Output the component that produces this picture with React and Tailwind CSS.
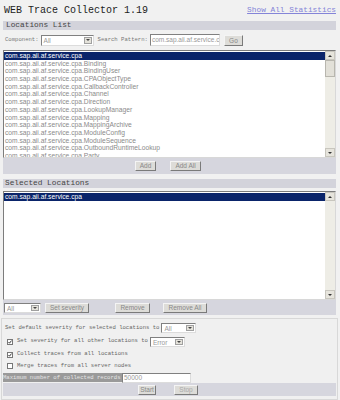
const mono = { fontFamily: '"Liberation Mono", "Courier New", monospace' };
const sans = { fontFamily: '"Liberation Sans", Arial, sans-serif' };

const locations = [
  "com.sap.aii.af.service.cpa",
  "com.sap.aii.af.service.cpa.Binding",
  "com.sap.aii.af.service.cpa.BindingUser",
  "com.sap.aii.af.service.cpa.CPAObjectType",
  "com.sap.aii.af.service.cpa.CallbackController",
  "com.sap.aii.af.service.cpa.Channel",
  "com.sap.aii.af.service.cpa.Direction",
  "com.sap.aii.af.service.cpa.LookupManager",
  "com.sap.aii.af.service.cpa.Mapping",
  "com.sap.aii.af.service.cpa.MappingArchive",
  "com.sap.aii.af.service.cpa.ModuleConfig",
  "com.sap.aii.af.service.cpa.ModuleSequence",
  "com.sap.aii.af.service.cpa.OutboundRuntimeLookup",
  "com.sap.aii.af.service.cpa.Party",
];

function Select({ value, className }) {
  return (
    <div
      className={`flex items-stretch bg-white border border-t-[#808080] border-l-[#808080] border-b-[#dcdcdc] border-r-[#dcdcdc] ${className}`}
    >
      <span className="flex-1 pl-[2px] text-[6.5px] leading-[9px] text-[#999]" style={sans}>
        {value}
      </span>
      <span className="w-[8px] my-[1px] mr-[1px] bg-[#e4e2da] border border-[#a0a0a0] flex items-center justify-center">
        <span className="w-0 h-0 border-l-[2px] border-r-[2px] border-t-[2px] border-l-transparent border-r-transparent border-t-[#444]" />
      </span>
    </div>
  );
}

function Btn({ children, className }) {
  return (
    <div
      className={`flex items-center justify-center bg-[#dddcd8] border border-t-[#f4f4f4] border-l-[#f4f4f4] border-b-[#7a7a7a] border-r-[#7a7a7a] text-[6.5px] text-[#888] ${className}`}
      style={sans}
    >
      {children}
    </div>
  );
}

function Scrollbar({ thumb }) {
  return (
    <div className="w-[10px] bg-[#eeede6] flex flex-col justify-between">
      <div>
        <div className="h-[9px] bg-[#e6e4dc] border border-[#c8c6be] flex items-center justify-center">
          <span className="w-0 h-0 border-l-[2px] border-r-[2px] border-b-[2px] border-l-transparent border-r-transparent border-b-[#333]" />
        </div>
        {thumb && <div className="h-[17px] bg-[#e2e0d8] border border-[#b8b6ae]" />}
      </div>
      <div className="h-[9px] bg-[#e6e4dc] border border-[#c8c6be] flex items-center justify-center">
        <span className="w-0 h-0 border-l-[2px] border-r-[2px] border-t-[2px] border-l-transparent border-r-transparent border-t-[#333]" />
      </div>
    </div>
  );
}

function ListBox({ items, height, thumb }) {
  return (
    <div
      className={`flex bg-white border border-t-[#7c7c7c] border-l-[#7c7c7c] border-b-[#d8d8d8] border-r-[#d8d8d8] ${height}`}
    >
      <div className="flex-1 overflow-hidden pt-[1px]" style={sans}>
        {items.map((it, i) => (
          <div
            key={it}
            className={`h-[7.7px] leading-[7.7px] text-[6.7px] pl-[1px] whitespace-nowrap ${
              i === 0 ? "bg-[#0a246a] text-white" : "text-[#8a8a8a]"
            }`}
          >
            {it}
          </div>
        ))}
      </div>
      <Scrollbar thumb={thumb} />
    </div>
  );
}

function Check({ checked }) {
  return (
    <span className="w-[6px] h-[6px] bg-white border border-[#777] flex items-center justify-center">
      {checked && (
        <svg width="4" height="4" viewBox="0 0 4 4">
          <path d="M0.5 2 L1.5 3.2 L3.5 0.6" fill="none" stroke="#222" strokeWidth="0.9" />
        </svg>
      )}
    </span>
  );
}

export default function App() {
  return (
    <div className="w-[340px] h-[400px] bg-[#f1f1f1] overflow-hidden" style={mono}>
      <div className="h-[20px] flex items-center justify-between pl-[4px] pr-[4px]">
        <span className="text-[10px] text-[#222]">WEB Trace Collector 1.19</span>
        <span className="text-[7.8px] text-[#8484d8] underline mt-[2px]">Show All Statistics</span>
      </div>

      <div className="ml-[3px] w-[333px]">
        <div className="h-[9px] mt-[1px] bg-[#d3d3db] pl-[3px] text-[7.8px] leading-[9px] text-[#444]">
          Locations List
        </div>
        <div className="h-[20px] flex items-center pl-[2px]">
          <span className="text-[5.6px] text-[#777] mr-[2px]">Component:</span>
          <Select value="All" className="w-[53px] h-[11px]" />
          <span className="text-[5.6px] text-[#777] ml-[4px] mr-[2px]">Search Pattern:</span>
          <div
            className="w-[70px] h-[12px] bg-white border border-t-[#808080] border-l-[#808080] border-b-[#dcdcdc] border-r-[#dcdcdc] text-[6.5px] leading-[10px] pl-[1px] text-[#999] overflow-hidden whitespace-nowrap"
            style={sans}
          >
            com.sap.aii.af.service.c
          </div>
          <Btn className="w-[19px] h-[11px] ml-[4px] mt-[1px]">Go</Btn>
        </div>
        <ListBox items={locations} height="h-[108px]" thumb />
        <div className="h-[16px] bg-[#d6d6de] flex items-center justify-center gap-[14px] pr-[3px]">
          <Btn className="w-[21px] h-[10px]">Add</Btn>
          <Btn className="w-[31px] h-[10px]">Add All</Btn>
        </div>

        <div className="h-[9px] mt-[5px] bg-[#d3d3db] pl-[2px] text-[7.8px] leading-[9px] text-[#444]">
          Selected Locations
        </div>
        <div className="h-[3px]" />
        <ListBox items={["com.sap.aii.af.service.cpa"]} height="h-[109px]" />
        <div className="h-[15px] bg-[#d6d6de] flex items-center pl-[1px]">
          <Select value="All" className="w-[37px] h-[10px]" />
          <Btn className="w-[44px] h-[10px] ml-[4px]">Set severity</Btn>
          <Btn className="w-[35px] h-[10px] ml-[26px]">Remove</Btn>
          <Btn className="w-[44px] h-[10px] ml-[13px]">Remove All</Btn>
        </div>
      </div>

      <div className="mt-[3px] ml-[1px] w-[337px] h-[82px] border border-[#d8d8d8] bg-[#f0f0f0] pt-[3px] text-[5.6px] text-[#666]">
        <div className="h-[12px] flex items-center pl-[3px]">
          <span>Set default severity for selected locations to</span>
          <Select value="All" className="w-[35px] h-[10px] ml-[2px]" />
        </div>
        <div className="h-[13px] flex items-center pl-[5px] pt-[2px]">
          <Check checked />
          <span className="ml-[4px]">Set severity for all other locations to</span>
          <Select value="Error" className="w-[35px] h-[10px] ml-[2px]" />
        </div>
        <div className="h-[13px] flex items-center pl-[5px] pt-[2px]">
          <Check checked />
          <span className="ml-[4px]">Collect traces from all locations</span>
        </div>
        <div className="h-[12px] flex items-center pl-[5px]">
          <Check />
          <span className="ml-[4px]">Merge traces from all server nodes</span>
        </div>
        <div className="h-[11px] flex items-center pl-[1px]">
          <span className="bg-[#9a9a9a] text-[#e6e6e6] h-[9px] leading-[9px] w-[119px] overflow-hidden whitespace-nowrap">
            Maximum number of collected records
          </span>
          <div
            className="w-[69px] h-[10px] bg-white border border-t-[#808080] border-l-[#808080] border-b-[#dcdcdc] border-r-[#dcdcdc] text-[6.5px] leading-[8px] pl-[1px] text-[#999]"
            style={sans}
          >
            50000
          </div>
        </div>
        <div className="h-[13px] mx-[1px] bg-[#d6d6de] flex items-center justify-center gap-[18px] pr-[3px]">
          <Btn className="w-[18px] h-[10px]">Start</Btn>
          <Btn className="w-[24px] h-[10px] text-[#aaa]">Stop</Btn>
        </div>
      </div>
    </div>
  );
}
